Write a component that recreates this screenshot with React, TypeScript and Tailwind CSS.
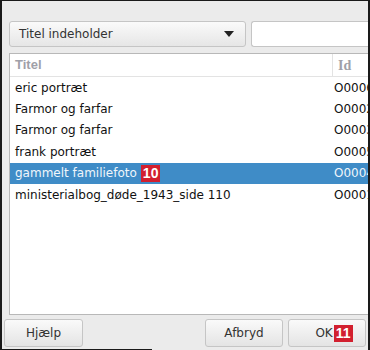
import React from 'react';

const rows = [
  { title: 'eric portræt', id: 'O0006' },
  { title: 'Farmor og farfar', id: 'O0002' },
  { title: 'Farmor og farfar', id: 'O0003' },
  { title: 'frank portræt', id: 'O0005' },
  { title: 'gammelt familiefoto', id: 'O0004', selected: true, badge: '10' },
  { title: 'ministerialbog_døde_1943_side 110', id: 'O0001' },
];

const Badge = ({ n }: { n: string }) => (
  <span className="inline-flex h-[17px] items-center bg-[#d2202f] px-[2px] text-[14px] font-bold leading-none text-white font-['Liberation_Sans',sans-serif]">
    {n}
  </span>
);

export default function App() {
  return (
    <div className="h-[350px] w-[370px] overflow-hidden bg-white">
      <div className="flex h-[350px] w-[370px] flex-col border-l-2 border-r-2 border-t border-[#1a1a1a] bg-[#ebebeb] font-['DejaVu_Sans',sans-serif] text-[12px] text-[#111]">
        <div className="flex h-[20px] shrink-0" />
        <div className="flex shrink-0 gap-[5px] pl-[7px]">
          <div className="flex h-[26px] w-[237px] items-center justify-between rounded-[3px] border border-[#c5c5c5] bg-gradient-to-b from-[#fafafa] to-[#e6e6e6] pl-[9px] pr-[11px] text-[#333]">
            <span>Titel indeholder</span>
            <svg width="10" height="6" viewBox="0 0 10 6">
              <path d="M0 0 H10 L5 6 Z" fill="#222" />
            </svg>
          </div>
          <div className="h-[26px] flex-1 rounded-l-[3px] border border-r-0 border-[#c5c5c5] bg-white" />
        </div>
        <div className="ml-[7px] mt-[6px] flex h-[262px] shrink-0 flex-col border border-r-0 border-[#b8b8b8] bg-white">
          <div className="flex h-[23px] shrink-0 items-center border-b border-[#e3e3e3]">
            <div className="flex-1 pl-[5px] font-['Liberation_Sans',sans-serif] text-[13px] font-bold text-[#a0a0a8]">Titel</div>
            <div className="flex h-full w-[36px] items-center border-l border-[#e3e3e3] pl-[5px] font-['Liberation_Serif',serif] text-[14px] font-bold text-[#a0a0a8]">Id</div>
          </div>
          {rows.map((r, i) => (
            <div
              key={i}
              className={`flex h-[21.4px] shrink-0 items-center ${r.selected ? 'bg-[#3f8cc7] text-[#f0f6fb]' : ''}`}
            >
              <div className="flex flex-1 items-center gap-[4px] whitespace-nowrap pl-[5px]">
                <span>{r.title}</span>
                {r.badge && <Badge n={r.badge} />}
              </div>
              <div className="w-[36px] overflow-hidden whitespace-nowrap pl-[2px]">{r.id}</div>
            </div>
          ))}
        </div>
        <div className="flex shrink-0 items-start pl-[2px] pt-[4px]">
          <button className="flex h-[28px] w-[79px] items-center justify-center rounded-[3px] border border-[#c5c5c5] bg-gradient-to-b from-[#fafafa] to-[#e4e4e4] text-[#333]">
            Hjælp
          </button>
          <div className="flex-1" />
          <button className="flex h-[28px] w-[78px] items-center justify-center rounded-[3px] border border-[#c5c5c5] bg-gradient-to-b from-[#fafafa] to-[#e4e4e4] text-[#333]">
            Afbryd
          </button>
          <button className="ml-[5px] mr-[2px] flex h-[28px] w-[78px] items-center justify-center gap-[1px] rounded-[3px] border border-[#c5c5c5] bg-gradient-to-b from-[#fafafa] to-[#e4e4e4] pl-[14px] text-[#333]">
            OK <Badge n="11" />
          </button>
        </div>
        <div className="mt-auto h-[1px] w-[150px] shrink-0 bg-[#1a1a1a]" />
      </div>
    </div>
  );
}
